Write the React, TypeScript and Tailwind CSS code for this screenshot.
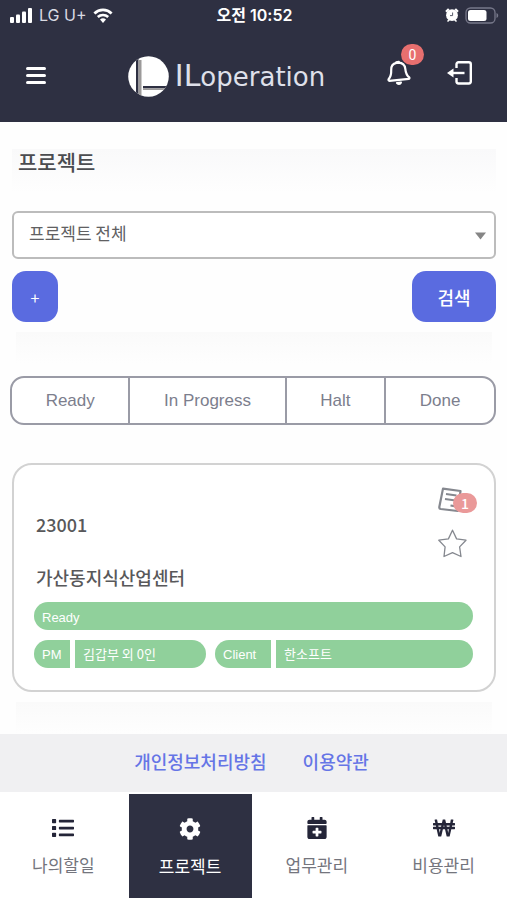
import { useState } from 'react';
import { FaList, FaCog, FaCalendarPlus, FaWonSign } from 'react-icons/fa';

const tabs = ['Ready', 'In Progress', 'Halt', 'Done'];

const menus = [
  { label: '나의할일', icon: FaList },
  { label: '프로젝트', icon: FaCog },
  { label: '업무관리', icon: FaCalendarPlus },
  { label: '비용관리', icon: FaWonSign },
];

function StatusBar() {
  return (
    <div className="grid h-[30px] grid-cols-3 items-center pr-2 pl-2.5 font-['Inter','Noto_Sans_CJK_KR',sans-serif]">
      <div className="flex items-center gap-1.5 text-base text-[#d9dae2]">
        <svg width="23" height="15" viewBox="0 0 23 15" fill="#ffffff">
          <rect x="0" y="9" width="4" height="6" rx="1" />
          <rect x="6" y="6.500" width="4" height="8.500" rx="1" />
          <rect x="12" y="3.500" width="4" height="11.500" rx="1" />
          <rect x="18" y="0" width="4" height="15" rx="1" />
        </svg>
        <span>LG U+</span>
        <svg width="20" height="15" viewBox="0 0 20 15">
          <path d="M1.400 5.400a12.500 12.500 0 0 1 17.200 0" fill="none" stroke="#ffffff" strokeWidth="2.800" />
          <path d="M4.800 9a7.600 7.600 0 0 1 10.400 0" fill="none" stroke="#ffffff" strokeWidth="2.600" />
          <path d="M10 15L7 11.600a4.300 4.300 0 0 1 6 0z" fill="#ffffff" />
        </svg>
      </div>
      <div className="text-center text-base font-semibold text-white">오전 10:52</div>
      <div className="flex items-center justify-end gap-1.5">
        <svg width="14" height="14" viewBox="0 0 14 14">
          <circle cx="7" cy="7.200" r="5.900" fill="#ffffff" />
          <path d="M1 3.800L3.800 1M10.200 1L13 3.800" stroke="#ffffff" strokeWidth="2.200" />
          <path d="M2.500 13.500l2-2M11.500 13.500l-2-2" stroke="#ffffff" strokeWidth="1.500" />
          <path d="M7.600 4.500v3.100H5" fill="none" stroke="#5a5c6c" strokeWidth="1" />
        </svg>
        <svg width="34" height="17" viewBox="0 0 34 17">
          <rect x="1" y="1" width="29" height="15" rx="4.500" fill="none" stroke="#77788a" strokeWidth="1.300" />
          <rect x="3" y="3" width="18.500" height="11" rx="2.500" fill="#ffffff" />
          <path d="M31.500 6v5c1.200-.4 1.700-1.300 1.700-2.500s-.5-2.100-1.700-2.500z" fill="#77788a" />
        </svg>
      </div>
    </div>
  );
}

function Logo() {
  return (
    <a href="#" className="flex items-center gap-1.5 pl-5 text-[#dfe0ea]">
      <svg width="41" height="41" viewBox="0 0 41 41">
        <clipPath id="disc">
          <circle cx="20.500" cy="20.500" r="20.300" />
        </clipPath>
        <g clipPath="url(#disc)">
          <rect width="41" height="41" fill="#ffffff" />
          <rect x="8" width="2.500" height="41" fill="#2e3042" />
          <rect x="10.500" y="4" width="3" height="37" fill="#9c9a9a" />
          <rect x="15" y="30" width="26" height="2.400" fill="#2e3042" />
          <rect x="15" y="32.400" width="26" height="1.600" fill="#9c9a9a" />
        </g>
      </svg>
      <span className="flex items-baseline font-['DejaVu_Sans',sans-serif] leading-none">
        <span className="text-[30px]">IL</span>
        <span className="text-[26px]">operation</span>
      </span>
    </a>
  );
}

function Header() {
  return (
    <header className="bg-[#2e3042]">
      <StatusBar />
      <div className="flex h-[92px] items-center justify-between pr-[34px] pl-[26px]">
        <button aria-label="메뉴" className="flex w-5 flex-col gap-1 pb-0.5">
          <span className="h-[3px] rounded-xs bg-white" />
          <span className="h-[3px] rounded-xs bg-white" />
          <span className="h-[3px] rounded-xs bg-white" />
        </button>
        <Logo />
        <div className="flex items-center gap-9 pb-1.5">
          <button aria-label="알림" className="relative">
            <svg width="24" height="26" viewBox="0 0 24 26" fill="none" stroke="#ffffff" strokeWidth="2.200" strokeLinejoin="round" strokeLinecap="round">
              <path d="M9.500 2.800C5.800 3.600 4 6.400 4.200 10c.2 4.200-.6 6.800-2.600 9.200-.3.800 0 1.600.8 1.600l19.400-1.900c.7-.2.900-1 .4-1.500-2.800-2.300-3.500-4.600-3.900-8.600-.4-3.700-2.900-6-6.700-6.200z" />
              <path d="M9.200 2.300l2.600-.4" />
              <path d="M10 23c.8 1.300 3.200 1.200 3.900-.4z" fill="#ffffff" />
            </svg>
            <span className="absolute -top-4 left-3.5 flex h-[21px] w-[23px] items-center justify-center rounded-full bg-[#e76f6f] font-['Roboto',sans-serif] text-sm text-white">
              0
            </span>
          </button>
          <button aria-label="로그아웃">
            <svg width="26" height="24" viewBox="0 0 26 24" fill="none" stroke="#ffffff" strokeWidth="2.400" strokeLinejoin="round">
              <path d="M9.500 7V3.200C9.500 2 10.300 1.300 11.500 1.300h10.300c1.200 0 2 .7 2 1.900v17.400c0 1.200-.8 1.900-2 1.900H11.500c-1.200 0-2-.7-2-1.900V17" />
              <path d="M17.500 12H4" />
              <path d="M6.500 7.500v9L0 12z" fill="#ffffff" stroke="none" />
            </svg>
          </button>
        </div>
      </div>
    </header>
  );
}

function ProjectCard() {
  return (
    <article className="rounded-[20px] border-2 border-[#d2d2d2] bg-white pt-[22px] pr-[21px] pb-[22px] pl-5">
      <div className="flex h-[111px] justify-between">
        <div className="flex flex-col gap-[25px] pt-[23px] pl-0.5 text-lg leading-7 font-medium text-[#58585a]">
          <span>23001</span>
          <h2>가산동지식산업센터</h2>
        </div>
        <div className="flex flex-col items-start gap-4 pr-1.5">
          <button aria-label="메모" className="relative">
            <svg width="25" height="26" viewBox="0 0 25 26" fill="none" stroke="#85888f" strokeWidth="2.200" strokeLinejoin="round">
              <path d="M5 1.600l17.500 2.400-2.800 20L2.800 22a1.800 1.800 0 0 1-1.500-2z" />
              <path d="M8 7l10.500 1.500M7 12l10.500 1.500M12.500 18.500l4 .6" />
            </svg>
            <span className="absolute top-1.5 left-[15px] flex h-5 w-6 items-center justify-center rounded-full bg-[#ea9999] text-sm font-medium text-white">
              1
            </span>
          </button>
          <button aria-label="즐겨찾기">
            <svg width="29" height="29" viewBox="0 0 29 29" fill="none" stroke="#85888f" strokeWidth="1.300" strokeLinejoin="round">
              <path d="M14.500 1.200l4.100 8.700 9.400 1.300-6.400 6.700 1.400 9.600-8.500-3.900-8.500 3.900 1.100-9.600L.8 11.200l9.600-1.300z" />
            </svg>
          </button>
        </div>
      </div>
      <div className="mt-1 flex h-7 items-center rounded-full bg-[#90d09b] px-2 pt-1 font-['Liberation_Sans',sans-serif] text-[13px] text-white">
        Ready
      </div>
      <div className="mt-2.5 grid grid-cols-[2fr_3fr] gap-[9px] text-[13px] text-white">
        <div className="flex h-7 gap-[5px]">
          <span className="flex w-9 items-center rounded-l-full bg-[#90d09b] pt-0.5 pl-2 font-['Liberation_Sans',sans-serif]">PM</span>
          <span className="flex flex-1 items-center rounded-r-full bg-[#90d09b] pl-2">김갑부 외 0인</span>
        </div>
        <div className="flex h-7 gap-[5px]">
          <span className="flex w-14 items-center rounded-l-full bg-[#90d09b] pt-0.5 pl-2 font-['Liberation_Sans',sans-serif]">Client</span>
          <span className="flex flex-1 items-center rounded-r-full bg-[#90d09b] pl-2">한소프트</span>
        </div>
      </div>
    </article>
  );
}

export default function App() {
  const [status, setStatus] = useState('');
  const [menu, setMenu] = useState('프로젝트');

  return (
    <div className="flex min-h-screen flex-col bg-[#fefefe] font-['Noto_Sans_CJK_KR',sans-serif]">
      <Header />

      <main className="flex-1 pt-[27px] pr-[11px] pl-3">
        <div className="flex h-[62px] items-start bg-linear-to-b from-[#f9f9fa] to-[#fefefe] to-70% pl-1.5">
          <h1 className="text-[21px] leading-6 font-medium text-[#4b4c50]">프로젝트</h1>
        </div>

        <form onSubmit={(e) => e.preventDefault()}>
          <div className="relative">
            <select
              aria-label="프로젝트 선택"
              className="block h-12 w-full appearance-none rounded-md border-2 border-[#bcbcbc] bg-white pb-1 pl-[15px] text-[17px] text-[#606062] outline-none"
            >
              <option>프로젝트 전체</option>
            </select>
            <svg className="pointer-events-none absolute top-[21px] right-2.5" width="11" height="8" viewBox="0 0 11 8" fill="#858585">
              <path d="M0 .5h11L5.500 7.500z" />
            </svg>
          </div>
          <div className="mt-3 flex justify-between">
            <button type="button" aria-label="프로젝트 추가" className="h-[51px] w-[46px] rounded-[14px] bg-[#5a6be0] text-base text-white">+</button>
            <button type="submit" className="h-[51px] w-[84px] rounded-[14px] bg-[#5a6be0] text-lg font-medium text-white">검색</button>
          </div>
        </form>

        <div className="mx-1 mt-2.5 h-8 bg-linear-to-b from-[#fafafa] to-[#fefefe]" />

        <div className="mt-3 -ml-0.5 flex h-[49px] overflow-hidden rounded-[14px] border-2 border-[#9a9ba6] bg-white font-['Liberation_Sans',sans-serif] text-[17px] text-[#7c7e8d]">
          {tabs.map((t) => (
            <button
              key={t}
              aria-pressed={status === t}
              onClick={() => setStatus(t)}
              className="flex-auto border-r-2 border-[#9a9ba6] last:border-r-0"
            >
              <span className="px-8">{t}</span>
            </button>
          ))}
        </div>

        <div className="mt-[38px]">
          <ProjectCard />
        </div>
        <div className="mx-1 mt-2.5 h-8 bg-linear-to-b from-[#fafafa] to-[#fefefe]" />
      </main>

      <footer className="flex h-[58px] items-center justify-center gap-9 bg-[#f0f0f2] pr-1 pb-1 text-lg font-medium text-[#6575e6]">
        <a href="#">개인정보처리방침</a>
        <a href="#">이용약관</a>
      </footer>

      <nav className="grid h-[108px] grid-cols-4 bg-white py-0.5">
        {menus.map(({ label, icon: Icon }) => {
          const active = menu === label;
          return (
            <button
              key={label}
              onClick={() => setMenu(label)}
              className={
                active
                  ? 'mx-0.5 flex flex-col items-center justify-center gap-3.5 bg-[#2e3042] pt-1 text-white'
                  : 'mx-0.5 flex flex-col items-center justify-center gap-3.5 pt-0.5 text-[#242538]'
              }
            >
              <Icon size={22} />
              <span className={active ? 'text-[17px] leading-6' : 'text-[17px] leading-6 text-[#74757d]'}>{label}</span>
            </button>
          );
        })}
      </nav>
    </div>
  );
}
